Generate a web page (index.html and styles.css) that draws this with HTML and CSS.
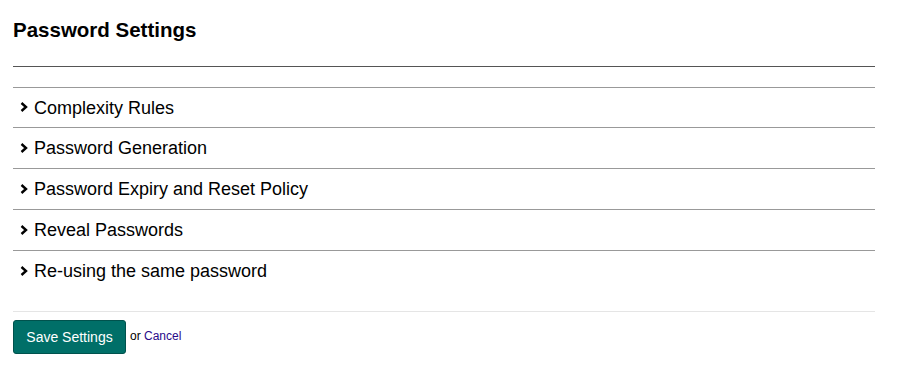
FILE: index.html
```html
<!DOCTYPE html>
<html lang="en">
<head>
    <meta charset="UTF-8">
    <meta name="viewport" content="width=device-width, initial-scale=1.0">
    <title>Password Settings</title>
    <link rel="stylesheet" href="styles.css">
</head>
<body>
    <div class="page">
        <h2 class="title">Password Settings</h2>
        <div class="sections">
            <div class="section first"><svg class="chev" viewBox="0 0 8 10"><path d="M1.5 1 L6 5 L1.5 9" /></svg>Complexity Rules</div>
            <div class="section"><svg class="chev" viewBox="0 0 8 10"><path d="M1.5 1 L6 5 L1.5 9" /></svg>Password Generation</div>
            <div class="section"><svg class="chev" viewBox="0 0 8 10"><path d="M1.5 1 L6 5 L1.5 9" /></svg>Password Expiry and Reset Policy</div>
            <div class="section"><svg class="chev" viewBox="0 0 8 10"><path d="M1.5 1 L6 5 L1.5 9" /></svg>Reveal Passwords</div>
            <div class="section last"><svg class="chev" viewBox="0 0 8 10"><path d="M1.5 1 L6 5 L1.5 9" /></svg>Re-using the same password</div>
        </div>
        <div class="actions">
            <button type="button" class="save">Save Settings</button>
            <span class="or">or <a href="#" class="cancel">Cancel</a></span>
        </div>
    </div>
</body>
</html>
```

FILE: styles.css
```css
body {
    margin: 0;
    font-family: "Liberation Sans", Arial, sans-serif;
    color: #000;
    background: #fff;
}
.page {
    width: 862px;
    padding: 0 13px;
}
.title {
    font-size: 20.5px;
    font-weight: bold;
    margin: 0;
    padding-top: 19px;
    height: 28px;
    line-height: 22px;
    padding-bottom: 19px;
    border-bottom: 1px solid #555;
}
.sections {
    margin-top: 20px;
    border-top: 1px solid #999;
}
.section {
    display: flex;
    align-items: center;
    box-sizing: border-box;
    height: 41px;
    padding-top: 1px;
    padding-left: 7px;
    border-bottom: 1px solid #999;
    font-size: 18px;
}
.section.first {
    height: 40px;
}
.section.last {
    height: 40px;
    border-bottom: none;
}
.chev {
    width: 8px;
    height: 10px;
    margin-right: 6px;
    margin-top: -2px;
}
.chev path {
    fill: none;
    stroke: #000;
    stroke-width: 2.4;
}
.actions {
    margin-top: 20px;
    border-top: 1px solid #e5e5e5;
    padding-top: 8px;
    display: flex;
    align-items: center;
}
.save {
    background: #006f68;
    color: #fff;
    border: 1px solid #00524d;
    border-radius: 3px;
    font-family: "Liberation Sans", Arial, sans-serif;
    font-size: 14px;
    height: 34px;
    width: 113px;
    padding: 0;
}
.or {
    font-size: 12px;
    margin-left: 4px;
    margin-top: -2px;
}
.cancel {
    color: #2a0a8a;
    text-decoration: none;
}
```
